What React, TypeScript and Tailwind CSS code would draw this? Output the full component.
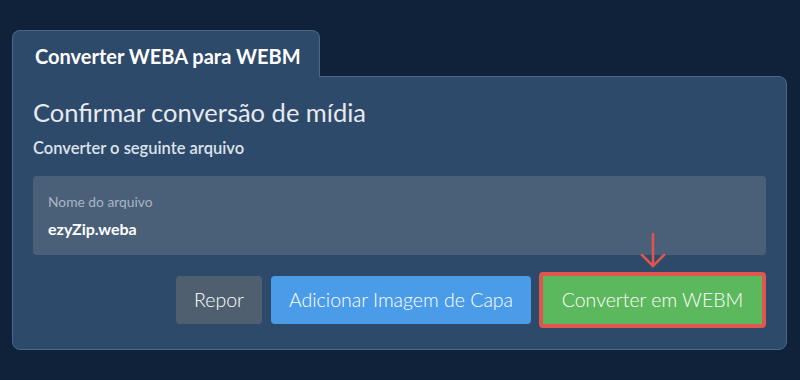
const App = () => {
  return (
    <div
      className="w-[800px] h-[380px] bg-[#10223a] pt-[30px] pl-[12px] pr-[13px]"
      style={{ fontFamily: 'Lato, "Noto Sans", sans-serif' }}
    >
      <div className="relative z-10 w-[308px] h-[47px] -mb-px bg-[#2e4a6a] border border-b-0 border-[#4a6688] rounded-t-lg flex items-center pl-[22px] pt-[3px]">
        <span className="text-[20px] font-bold text-white">Converter WEBA para WEBM</span>
      </div>
      <div className="bg-[#2e4a6a] border border-[#4a6688] rounded-b-lg rounded-tr-lg px-[20px] pt-[18px] pb-[21px]">
        <h2 className="text-[25.5px] leading-[34px] text-[#e6e9ee]">Confirmar conversão de mídia</h2>
        <p className="mt-[7px] text-[16.5px] font-semibold text-[#dde3ea]">Converter o seguinte arquivo</p>
        <div className="mt-[15px] h-[79px] bg-[#4a6079] rounded-[4px] px-[15px] pt-[18px]">
          <div className="text-[13.8px] leading-[16px] text-[#a9b5c3]">Nome do arquivo</div>
          <div className="mt-[9px] text-[16px] leading-[20px] font-bold text-white">ezyZip.weba</div>
        </div>
        <div className="mt-[17px] flex justify-end items-center gap-[8px]">
          <button className="h-[48px] w-[86px] mr-px rounded-[4px] bg-[#4f5f70] text-white text-[19.5px] font-light">Repor</button>
          <button className="h-[48px] w-[260px] rounded-[4px] bg-[#4a9be8] text-white text-[19.5px] font-light">Adicionar Imagem de Capa</button>
          <div className="relative">
            <svg className="absolute left-1/2 -translate-x-1/2 -top-[40px]" width="28" height="38" viewBox="0 0 28 38" fill="none" stroke="#e0564e" strokeWidth="2.5" strokeLinecap="round">
              <path d="M14 2 V34" />
              <path d="M3 23 L14 34 L25 23" />
            </svg>
            <button className="h-[56px] w-[227px] rounded-[4px] bg-[#5cb85c] border-[4px] border-[#e0564e] text-white text-[19.5px] font-light">Converter em WEBM</button>
          </div>
        </div>
      </div>
    </div>
  );
};

export default App;
